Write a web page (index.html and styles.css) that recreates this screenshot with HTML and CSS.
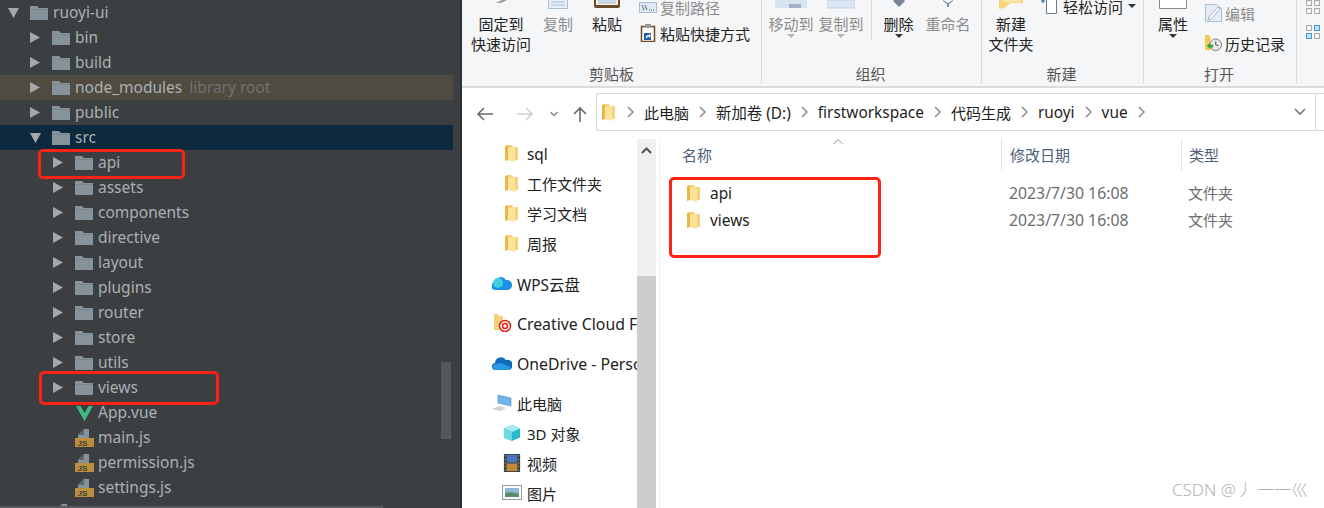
FILE: index.html
```html
<!DOCTYPE html>
<html lang="zh-CN">
<head>
    <meta charset="UTF-8">
    <meta name="viewport" content="width=device-width, initial-scale=1.0">
    <title>ruoyi-ui</title>
    <link rel="stylesheet" href="styles.css">
</head>
<body>
    <svg class="defs" width="0" height="0">
        <symbol id="ide-folder" viewBox="0 0 18 14"><path d="M0 0h7l2 2h9v12H0z" fill="#87939a"/><path d="M0 3h18v1H0z" fill="#7b878e"/></symbol>
        <symbol id="arrow-right" viewBox="0 0 10 11"><path d="M0 0l10 5.500L0 11z" fill="#a5a8aa"/></symbol>
        <symbol id="arrow-down" viewBox="0 0 11 10"><path d="M0 0h11L5.500 10z" fill="#a5a8aa"/></symbol>
        <symbol id="js-file" viewBox="0 0 19 18">
            <path d="M3 6l6-6h5v9H3z" fill="#87939a"/><path d="M3 6h6V0z" fill="#5f676c"/>
            <rect y="9" width="19" height="9" fill="#bb8d3c"/>
            <text x="2.500" y="16.500" font-size="8" font-weight="700" font-family="Liberation Sans, sans-serif" fill="#3c3f41">JS</text>
        </symbol>
        <symbol id="win-folder" viewBox="0 0 13 17">
            <path d="M0 1l3-1v15l-3 1z" fill="#e9b84d"/>
            <path d="M3 0h4l1 2h5v13H3z" fill="#f6d27a"/>
            <path d="M3 3l7-1v15l-7-2z" fill="#fde49b"/>
        </symbol>
        <symbol id="chevron" viewBox="0 0 7 12"><path d="M1 1l5 5-5 5" fill="none" stroke="#8a8a8a" stroke-width="1.500"/></symbol>
    </svg>

    <div class="ide">
        <div class="tree">
            <div class="row l0"><svg class="arrow-d"><use href="#arrow-down"/></svg><svg class="folder"><use href="#ide-folder"/></svg><span>ruoyi-ui</span></div>
            <div class="row l1"><svg class="arrow"><use href="#arrow-right"/></svg><svg class="folder"><use href="#ide-folder"/></svg><span>bin</span></div>
            <div class="row l1"><svg class="arrow"><use href="#arrow-right"/></svg><svg class="folder"><use href="#ide-folder"/></svg><span>build</span></div>
            <div class="row l1 lib"><svg class="arrow"><use href="#arrow-right"/></svg><svg class="folder"><use href="#ide-folder"/></svg><span>node_modules</span><em>library root</em></div>
            <div class="row l1"><svg class="arrow"><use href="#arrow-right"/></svg><svg class="folder"><use href="#ide-folder"/></svg><span>public</span></div>
            <div class="row l1 selected"><svg class="arrow-d"><use href="#arrow-down"/></svg><svg class="folder"><use href="#ide-folder"/></svg><span>src</span></div>
            <div class="row l2"><svg class="arrow"><use href="#arrow-right"/></svg><svg class="folder"><use href="#ide-folder"/></svg><span>api</span></div>
            <div class="row l2"><svg class="arrow"><use href="#arrow-right"/></svg><svg class="folder"><use href="#ide-folder"/></svg><span>assets</span></div>
            <div class="row l2"><svg class="arrow"><use href="#arrow-right"/></svg><svg class="folder"><use href="#ide-folder"/></svg><span>components</span></div>
            <div class="row l2"><svg class="arrow"><use href="#arrow-right"/></svg><svg class="folder"><use href="#ide-folder"/></svg><span>directive</span></div>
            <div class="row l2"><svg class="arrow"><use href="#arrow-right"/></svg><svg class="folder"><use href="#ide-folder"/></svg><span>layout</span></div>
            <div class="row l2"><svg class="arrow"><use href="#arrow-right"/></svg><svg class="folder"><use href="#ide-folder"/></svg><span>plugins</span></div>
            <div class="row l2"><svg class="arrow"><use href="#arrow-right"/></svg><svg class="folder"><use href="#ide-folder"/></svg><span>router</span></div>
            <div class="row l2"><svg class="arrow"><use href="#arrow-right"/></svg><svg class="folder"><use href="#ide-folder"/></svg><span>store</span></div>
            <div class="row l2"><svg class="arrow"><use href="#arrow-right"/></svg><svg class="folder"><use href="#ide-folder"/></svg><span>utils</span></div>
            <div class="row l2"><svg class="arrow"><use href="#arrow-right"/></svg><svg class="folder"><use href="#ide-folder"/></svg><span>views</span></div>
            <div class="row l2 file"><svg class="file-icon" viewBox="0 0 19 18"><path d="M1 2h4.500L9.500 9l4-7H18L9.500 17z" fill="#41b883"/></svg><span>App.vue</span></div>
            <div class="row l2 file"><svg class="file-icon"><use href="#js-file"/></svg><span>main.js</span></div>
            <div class="row l2 file"><svg class="file-icon"><use href="#js-file"/></svg><span>permission.js</span></div>
            <div class="row l2 file"><svg class="file-icon"><use href="#js-file"/></svg><span>settings.js</span></div>
            <div class="row l1 file"><svg class="file-icon"><use href="#js-file"/></svg><span>babel.config.js</span></div>
        </div>
        <div class="v-thumb"></div>
        <div class="h-thumb"></div>
        <div class="mark mark-api"></div>
        <div class="mark mark-views"></div>
    </div>

    <div class="explorer">
        <div class="ribbon">
            <div class="group g-clip">
                <div class="group-body">
                    <div class="big pin">
                        <svg class="top-icon" width="16" height="14"><path d="M3 3l6-3h5L8 3z" fill="#9c9c9c"/></svg>
                        <p>固定到</p><p>快速访问</p>
                    </div>
                    <div class="big copy off">
                        <svg class="top-icon" width="20" height="14"><path d="M.5 0v8.500h19V0" fill="#eaf0f8" stroke="#a9bcd6"/><path d="M3 2h14M3 5h14" stroke="#a9bcd6"/></svg>
                        <p>复制</p>
                    </div>
                    <div class="big paste">
                        <svg class="top-icon" width="26" height="14"><path d="M0 0h26v6q0 2-2 2H2q-2 0-2-2z" fill="#6b4a2b"/><path d="M2 0h22v5H2z" fill="#f4efe2"/><path d="M4 1h18M4 3h18" stroke="#9dbbdc"/></svg>
                        <p>粘贴</p>
                    </div>
                    <div class="small-col tight">
                        <div class="small off">
                            <svg class="small-icon" width="18" height="11"><rect x=".5" y=".5" width="17" height="10" fill="#dfe8f3" stroke="#a9bcd6"/><path d="M3 3l2 5M6 3l2 5M10 8h1M12 8h1M14 8h1" stroke="#5c6b80"/></svg>
                            <span>复制路径</span>
                        </div>
                        <div class="small">
                            <svg class="small-icon" width="18" height="18" viewBox="0 0 18 18"><rect x="2.500" y="2.500" width="13" height="15" fill="#fff" stroke="#6b4a2b" stroke-width="1.500"/><rect x="6" y="0" width="6" height="4" fill="#9a9a9a"/><path d="M5 9h7v7H5z" fill="#1b5fa8"/><path d="M7 15v-2q0-2 3-2V9.500l2 2.500-2 2v-1.500q-2 0-3 2.500z" fill="#fff"/></svg>
                            <span>粘贴快捷方式</span>
                        </div>
                    </div>
                </div>
                <div class="group-label">剪贴板</div>
            </div>
            <div class="group g-org">
                <div class="group-body">
                    <div class="big off">
                        <svg class="top-icon" width="32" height="14"><path d="M0 0h32v8H19l-3-3-3 3H0z" fill="#d9e4f2"/><path d="M14 4h12v4H14z" fill="#9fb2ca"/></svg>
                        <p>移动到</p><i class="drop"></i>
                    </div>
                    <div class="big off">
                        <svg class="top-icon" width="28" height="14"><path d="M0 0h28v8H0z" fill="#dbe5f3" stroke="#c5d2e4"/></svg>
                        <p>复制到</p><i class="drop"></i>
                    </div>
                    <div class="vline"></div>
                    <div class="big del">
                        <svg class="top-icon" width="16" height="14"><path d="M8 7L2 1l1-1h10l1 1z" fill="#7a8596"/></svg>
                        <p>删除</p><i class="drop dark"></i>
                    </div>
                    <div class="big off">
                        <svg class="top-icon" width="12" height="14"><path d="M1 0l5 3 5-3v1L7 4v3H5V4L1 1z" fill="#7d93ad"/></svg>
                        <p>重命名</p>
                    </div>
                </div>
                <div class="group-label">组织</div>
            </div>
            <div class="group g-new">
                <div class="group-body">
                    <div class="big">
                        <svg class="top-icon" width="24" height="14"><path d="M0 0h24v3L12 3 5 8 0 9z" fill="#f8d37c"/><path d="M4 0h18v2H4z" fill="#fbe6ae"/></svg>
                        <p>新建</p><p>文件夹</p>
                    </div>
                    <div class="small-col tight">
                        <div class="small">
                            <svg class="small-icon" width="16" height="18"><path d="M5.500 1v15.500h10V1" fill="#fff" stroke="#6e7a88"/><path d="M0 4h4M2 2v4" stroke="#1b5fa8"/></svg>
                            <span>轻松访问</span><i class="drop dark side"></i>
                        </div>
                    </div>
                </div>
                <div class="group-label">新建</div>
            </div>
            <div class="group g-open">
                <div class="group-body">
                    <div class="big">
                        <svg class="top-icon" width="28" height="14"><path d="M.5 0v8.500h27V0" fill="#fff" stroke="#8c8c8c"/></svg>
                        <p>属性</p><i class="drop dark"></i>
                    </div>
                    <div class="small-col wide">
                        <div class="small off">
                            <svg class="small-icon" width="17" height="18"><path d="M.5.5h11l5 4v13H.5z" fill="#e6edf6" stroke="#a9bcd6"/><path d="M4 13L13 3l2 2-9 10-3 1z" fill="#fff" stroke="#9fb2ca"/></svg>
                            <span>编辑</span>
                        </div>
                        <div class="small">
                            <svg class="small-icon" width="17" height="20" viewBox="0 0 19 20"><path d="M0 1h4l2 2v15H0z" fill="#f3c859"/><circle cx="12" cy="12" r="6.500" fill="#e8e8e8" stroke="#777"/><path d="M12 8v4l3 1" fill="none" stroke="#444"/><path d="M2 13l4-3v2h3v3H6v2z" fill="#3aa53a"/></svg>
                            <span>历史记录</span>
                        </div>
                    </div>
                </div>
                <div class="group-label">打开</div>
            </div>
            <div class="group g-view">
                <div class="layouts">
                    <i></i><i></i><i></i><i></i>
                </div>
                <div class="layouts on">
                    <i></i><i class="sel"></i><i class="sel"></i><i></i>
                </div>
            </div>
        </div>

        <div class="address">
            <svg class="nav-btn" viewBox="0 0 39 16"><path d="M27 8H12M18 2l-6 6 6 6" fill="none" stroke="#6a6a6a" stroke-width="1.600"/></svg>
            <svg class="nav-btn" viewBox="0 0 39 16"><path d="M12 8h15M21 2l6 6-6 6" fill="none" stroke="#d0d0d0" stroke-width="1.600"/></svg>
            <svg class="nav-btn down" viewBox="0 0 20 16"><path d="M6.500 6l3.500 3.500L13.500 6" fill="none" stroke="#8a8a8a" stroke-width="1.500"/></svg>
            <svg class="nav-btn up" viewBox="0 0 32 16"><path d="M16 16V2M10 8l6-6 6 6" fill="none" stroke="#6a6a6a" stroke-width="1.600"/></svg>
            <div class="path">
                <svg class="path-folder"><use href="#win-folder"/></svg>
                <svg class="chev"><use href="#chevron"/></svg>
                <span>此电脑</span>
                <svg class="chev"><use href="#chevron"/></svg>
                <span class="latin">新加卷 (D:)</span>
                <svg class="chev"><use href="#chevron"/></svg>
                <span class="latin">firstworkspace</span>
                <svg class="chev"><use href="#chevron"/></svg>
                <span>代码生成</span>
                <svg class="chev"><use href="#chevron"/></svg>
                <span class="latin">ruoyi</span>
                <svg class="chev"><use href="#chevron"/></svg>
                <span class="latin">vue</span>
                <svg class="chev"><use href="#chevron"/></svg>
                <svg class="path-drop" viewBox="0 0 12 8"><path d="M1 1l5 5 5-5" fill="none" stroke="#777" stroke-width="1.600"/></svg>
                <div class="path-end"></div>
            </div>
        </div>

        <div class="main">
            <div class="nav">
                <div class="nav-group">
                    <div class="item sub"><svg class="item-folder"><use href="#win-folder"/></svg><span class="latin">sql</span></div>
                    <div class="item sub"><svg class="item-folder"><use href="#win-folder"/></svg><span>工作文件夹</span></div>
                    <div class="item sub"><svg class="item-folder"><use href="#win-folder"/></svg><span>学习文档</span></div>
                    <div class="item sub"><svg class="item-folder"><use href="#win-folder"/></svg><span>周报</span></div>
                </div>
                <div class="nav-group">
                    <div class="item top"><svg class="item-icon" viewBox="0 0 20 14"><path d="M4 14a4 4 0 0 1-1-8 6 6 0 0 1 11-2 5 5 0 0 1 2 10z" fill="#1f8fe8"/><circle cx="6" cy="7" r="5" fill="#3fd0e0"/></svg><span class="latin">WPS云盘</span></div>
                </div>
                <div class="nav-group">
                    <div class="item top cc"><svg class="item-icon" viewBox="0 0 20 18"><path d="M2 0h4l1 2h4v14H2z" fill="#f4d07a"/><circle cx="13" cy="12" r="5.500" fill="#fff" stroke="#e2231a" stroke-width="1.500"/><circle cx="13" cy="12" r="2.500" fill="none" stroke="#e2231a" stroke-width="1.500"/></svg><span class="wide-latin">Creative Cloud Files</span></div>
                </div>
                <div class="nav-group">
                    <div class="item top"><svg class="item-icon" viewBox="0 0 20 14"><path d="M4 14a3.500 3.500 0 0 1-1-7 6 6 0 0 1 11-3 5 5 0 0 1 3 10z" fill="#0f6cbd"/><path d="M4 14a3 3 0 0 1 0-6l5-1 9 4q1 3-2 3z" fill="#2b9be8"/></svg><span class="wide-latin">OneDrive - Personal</span></div>
                </div>
                <div class="nav-group">
                    <div class="item top"><svg class="item-icon" viewBox="0 0 20 18"><path d="M6 1l13 3v8L6 9z" fill="#6cb6ea" stroke="#5b8fb8" stroke-width=".6"/><path d="M0 15l7-3 7 2-6 3z" fill="#cfd3d6"/></svg><span>此电脑</span></div>
                    <div class="item sub"><svg class="item-icon" viewBox="0 0 20 20"><path d="M10 1l9 4v10l-9 4-9-4V5z" fill="#2cb7ce"/><path d="M10 1l9 4-9 4-9-4z" fill="#a5eaf0"/><path d="M1 5l9 4v10l-9-4z" fill="#70d9e4"/></svg><span>3D 对象</span></div>
                    <div class="item sub"><svg class="item-icon" viewBox="0 0 20 20"><rect x="1" width="18" height="20" fill="#3c3c3c"/><rect x="4" y="1" width="12" height="8.500" fill="#4a78c0"/><rect x="4" y="10.500" width="12" height="8.500" fill="#c08a3a"/><path d="M2 2h1M2 6h1M2 10h1M2 14h1M2 18h1M17 2h1M17 6h1M17 10h1M17 14h1M17 18h1" stroke="#ddd"/></svg><span>视频</span></div>
                    <div class="item sub"><svg class="item-icon" viewBox="0 0 20 16"><rect x=".5" y=".5" width="19" height="14" fill="#fff" stroke="#9a9a9a"/><rect x="3" y="3" width="14" height="9" fill="#8fb8d8"/><path d="M3 12V8q7-2 14 1v3z" fill="#5d8a6a"/></svg><span>图片</span></div>
                </div>
            </div>
            <div class="scroll">
                <svg class="scroll-up" viewBox="0 0 11 7"><path d="M1 6l4.500-4.500L10 6" fill="none" stroke="#555" stroke-width="2"/></svg>
                <div class="scroll-thumb"></div>
            </div>
            <div class="list">
                <div class="list-head">
                    <div class="col-name">名称<svg class="sort" viewBox="0 0 10 5"><path d="M.5 5L5 .5 9.500 5" fill="none" stroke="#909090"/></svg></div>
                    <div class="col-date">修改日期</div>
                    <div class="col-type">类型</div>
                </div>
                <div class="file-row">
                    <div class="col-name"><svg class="item-folder"><use href="#win-folder"/></svg><span class="latin">api</span></div>
                    <div class="col-date">2023/7/30 16:08</div>
                    <div class="col-type">文件夹</div>
                </div>
                <div class="file-row">
                    <div class="col-name"><svg class="item-folder"><use href="#win-folder"/></svg><span class="latin">views</span></div>
                    <div class="col-date">2023/7/30 16:08</div>
                    <div class="col-type">文件夹</div>
                </div>
                <div class="mark mark-files"></div>
            </div>
        </div>
        <div class="watermark">CSDN @丿 一一巛</div>
    </div>
</body>
</html>
```

FILE: styles.css
```css
*{
    box-sizing: border-box;
}
html,body{
    margin: 0;
    height: 508px;
    overflow: hidden;
}
body{
    display: flex;
    font-family: "Noto Sans", "Noto Sans CJK SC", sans-serif;
    background: #fff;
}
p{
    margin: 0;
}
.defs{
    position: absolute;
}
.mark{
    position: absolute;
    border: 3px solid #fb2316;
    border-radius: 5px;
}
.latin{
    font-size: 15.4px;
}
.wide-latin{
    font-size: 15.8px;
}

/* ide project tree */
.ide{
    position: relative;
    flex: none;
    width: 462px;
    height: 508px;
    background: #3c3f41;
    border-right: 2px solid #2f3133;
    overflow: hidden;
    color: #a9b0b5;
    font-size: 15.5px;
}
.tree{
    width: 453px;
}
.row{
    display: flex;
    align-items: center;
    height: 25px;
    white-space: nowrap;
}
.row span, .row em{
    margin-top: -2px;
}
.row.l0{ padding-left: 8px; }
.row.l1{ padding-left: 30px; }
.row.l2{ padding-left: 53px; }
.row.lib{ background: #4f4b41; }
.row.selected{ background: #0d293e; }
.row.file{ padding-left: 75px; }
.row.l1.file{ padding-left: 53px; }
.row em{
    margin-left: 7px;
    font-style: normal;
    color: #6f7173;
}
.arrow{
    flex: none;
    width: 10px;
    height: 11px;
}
.arrow-d{
    flex: none;
    width: 11px;
    height: 10px;
}
.folder{
    flex: none;
    width: 18px;
    height: 14px;
    margin: 0 5px 0 12px;
}
.arrow-d + .folder{
    margin-left: 11px;
}
.file-icon{
    flex: none;
    width: 19px;
    height: 18px;
    margin-right: 4px;
}
.v-thumb{
    position: absolute;
    left: 441px;
    top: 362px;
    width: 10px;
    height: 77px;
    background: #55585a;
}
.h-thumb{
    position: absolute;
    left: 0;
    top: 506px;
    width: 383px;
    height: 2px;
    background: #57595b;
}
.mark-api{
    left: 38px;
    top: 149px;
    width: 147px;
    height: 30px;
}
.mark-views{
    left: 39px;
    top: 371px;
    width: 180px;
    height: 34px;
}

/* windows explorer */
.explorer{
    position: relative;
    flex: 1;
    min-width: 0;
    height: 508px;
    color: #222;
    font-size: 15px;
}
.ribbon{
    display: flex;
    height: 88px;
    background: #f5f6f7;
    border-bottom: 2px solid #dcdcdc;
    overflow: hidden;
}
.group{
    flex: none;
    display: flex;
    flex-direction: column;
    height: 84px;
    border-right: 1px solid #dcdde0;
}
.g-clip{ width: 300px; padding-left: 8px; }
.g-org{ width: 220px; padding-left: 6px; }
.g-new{ width: 162px; padding-left: 6px; }
.g-open{ width: 153px; padding-left: 6px; }
.g-view{ flex: 1; padding-left: 9px; border-right: 0; }
.group-body{
    display: flex;
    height: 64px;
}
.group-label{
    height: 20px;
    line-height: 20px;
    padding-right: 8px;
    text-align: center;
    color: #555;
    font-size: 15px;
}
.big{
    flex: none;
    width: 46px;
    display: flex;
    flex-direction: column;
    align-items: center;
    line-height: 20px;
    white-space: nowrap;
}
.big.pin{ width: 62px; }
.big.copy{ width: 48px; margin-left: 2px; }
.big.paste{ margin-left: 2px; }
.big.del{ width: 53px; }
.g-org .big + .big{ margin-left: 4px; }
.g-org .del, .g-org .del + .big{ margin-left: 0; }
.off{ color: #8c8c8c; }
.top-icon{
    flex: none;
    display: block;
}
.drop{
    width: 0;
    height: 0;
    margin-top: 0;
    border: 4px solid transparent;
    border-top-color: #b5b5b5;
    border-bottom: 0;
}
.drop.dark{ border-top-color: #333; }
.drop.side{ margin: 0 0 0 5px; }
.vline{
    flex: none;
    width: 1px;
    height: 40px;
    margin-left: 7px;
    background: #dcdde0;
}
.small-col{
    margin-left: 9px;
}
.small-col.tight{
    margin-top: -6px;
}
.small-col.tight .small{
    height: 26px;
}
.g-new .small-col{
    margin-left: 7px;
    margin-top: -7px;
}
.small-col.wide{
    margin-top: -2px;
}
.small-col.wide .small{
    height: 30px;
}
.small{
    display: flex;
    align-items: center;
    white-space: nowrap;
}
.small-icon{
    flex: none;
    margin-right: 3px;
}
.g-new .small-icon{
    margin-right: 6px;
}
.layouts{
    display: grid;
    grid-template-columns: 6px 6px;
    gap: 2px;
    width: 14px;
}
.layouts.on{
    margin-top: 11px;
}
.layouts i{
    height: 6px;
    border: 1px solid #a9a9a9;
}
.layouts i.sel{
    background: #bfe0f8;
    border-color: #3a97e0;
}

/* address bar */
.address{
    display: flex;
    align-items: flex-end;
    height: 43px;
    padding-left: 4px;
    background: #fff;
}
.nav-btn{
    flex: none;
    align-self: center;
    width: 39px;
    height: 16px;
    margin-top: 9px;
}
.nav-btn.down{ width: 20px; }
.nav-btn.up{ width: 32px; }
.path{
    flex: 1;
    display: flex;
    align-items: center;
    gap: 10px;
    height: 38px;
    padding-left: 5px;
    border: 1px solid #d9d9d9;
    border-right: 0;
    color: #1e1e1e;
    white-space: nowrap;
}
.path-folder{
    flex: none;
    width: 13px;
    height: 17px;
    margin-right: 2px;
}
.chev{
    flex: none;
    width: 7px;
    height: 12px;
}
.path-drop{
    flex: none;
    width: 12px;
    height: 8px;
    margin-left: auto;
}
.path-end{
    flex: none;
    width: 9px;
    height: 100%;
    margin-left: -1px;
    border-left: 1px solid #d9d9d9;
}

/* nav and file list */
.main{
    display: flex;
    height: 377px;
    padding-top: 8px;
    overflow: hidden;
}
.nav{
    flex: none;
    width: 175px;
    margin-top: -1px;
    overflow: hidden;
    white-space: nowrap;
}
.nav-group + .nav-group{
    margin-top: 10px;
}
.item{
    display: flex;
    align-items: center;
    height: 30px;
}
.item .latin, .item .wide-latin{
    margin-top: 2px;
}
.item.sub{
    padding-left: 40px;
}
.item.top{
    padding-left: 30px;
}
.item.sub .item-folder{
    margin: 0 9px 0 3px;
}
.item-folder{
    flex: none;
    width: 13px;
    height: 17px;
}
.item-icon{
    flex: none;
    width: 20px;
    height: 18px;
    margin-right: 5px;
}
.scroll{
    flex: none;
    width: 19px;
    margin-right: 3px;
    background: #f0f0f0;
    display: flex;
    flex-direction: column;
}
.scroll-up{
    width: 11px;
    height: 7px;
    margin: 8px 4px 0;
}
.scroll-thumb{
    margin-top: 122px;
    flex: 1;
    background: #cdcdcd;
}
.list{
    position: relative;
    flex: 1;
    min-width: 0;
    border-left: 1px solid #f0f0f0;
}
.list-head{
    display: flex;
    align-items: stretch;
    height: 32px;
    line-height: 32px;
    margin-bottom: 9px;
    color: #4c607a;
}
.col-name{
    position: relative;
    flex: none;
    display: flex;
    align-items: center;
    width: 341px;
    padding-left: 22px;
}
.col-date{
    flex: none;
    width: 180px;
    padding-left: 8px;
}
.file-row .col-date{
    font-size: 15.8px;
}
.col-type{
    flex: none;
    padding-left: 7px;
}
.list-head .col-date, .list-head .col-type{
    border-left: 1px solid #e3e3e3;
}
.sort{
    position: absolute;
    left: 173px;
    top: 0;
    width: 10px;
    height: 5px;
}
.file-row{
    display: flex;
    height: 27px;
    line-height: 27px;
    color: #6d6d6d;
}
.file-row .col-name{
    padding-left: 27px;
    color: #1e1e1e;
}
.file-row .item-folder{
    margin-right: 10px;
}
.mark-files{
    left: 9px;
    top: 38px;
    width: 212px;
    height: 81px;
    border-color: #fd2214;
}
.watermark{
    position: absolute;
    left: 710px;
    top: 476px;
    color: #b4b4b4;
    font-size: 17px;
    font-weight: 300;
    white-space: nowrap;
}
```
